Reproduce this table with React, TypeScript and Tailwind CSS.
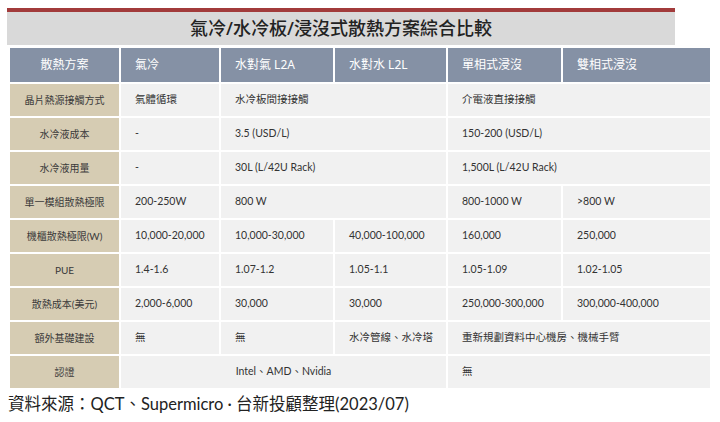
import React from "react";

type Cell = { text: string; span?: number; center?: boolean };
type Row = { label: string; cells: Cell[] };

const FONT = '"Noto Sans", "Noto Sans CJK TC", sans-serif';
const DATA_FONT = 'Lato, "Noto Sans CJK TC", sans-serif';

const HEAD = ["散熱方案", "氣冷", "水對氣 L2A", "水對水 L2L", "單相式浸沒", "雙相式浸沒"];

const ROWS: Row[] = [
  { label: "晶片熱源接觸方式", cells: [{ text: "氣體循環" }, { text: "水冷板間接接觸", span: 2 }, { text: "介電液直接接觸", span: 2 }] },
  { label: "水冷液成本", cells: [{ text: "-" }, { text: "3.5 (USD/L)", span: 2 }, { text: "150-200 (USD/L)", span: 2 }] },
  { label: "水冷液用量", cells: [{ text: "-" }, { text: "30L (L/42U Rack)", span: 2 }, { text: "1,500L (L/42U Rack)", span: 2 }] },
  { label: "單一模組散熱極限", cells: [{ text: "200-250W" }, { text: "800 W", span: 2 }, { text: "800-1000 W" }, { text: ">800 W" }] },
  { label: "機櫃散熱極限(W)", cells: [{ text: "10,000-20,000" }, { text: "10,000-30,000" }, { text: "40,000-100,000" }, { text: "160,000" }, { text: "250,000" }] },
  { label: "PUE", cells: [{ text: "1.4-1.6" }, { text: "1.07-1.2" }, { text: "1.05-1.1" }, { text: "1.05-1.09" }, { text: "1.02-1.05" }] },
  { label: "散熱成本(美元)", cells: [{ text: "2,000-6,000" }, { text: "30,000" }, { text: "30,000" }, { text: "250,000-300,000" }, { text: "300,000-400,000" }] },
  { label: "額外基礎建設", cells: [{ text: "無" }, { text: "無" }, { text: "水冷管線、水冷塔" }, { text: "重新規劃資料中心機房、機械手臂", span: 2 }] },
  { label: "認證", cells: [{ text: "Intel、AMD、Nvidia", span: 3, center: true }, { text: "無", span: 2 }] },
];

const SPAN: Record<number, string> = { 1: "col-span-1", 2: "col-span-2", 3: "col-span-3" };

export default function App() {
  return (
    <div className="h-[422px] w-[720px] bg-white pt-2" style={{ fontFamily: FONT }}>
      <div className="ml-[7px] w-[668px]">
        <div className="h-1 bg-[#a23b3b]" />
        <div className="flex h-[33px] items-center justify-center bg-[#d9d9d9] text-[18px] font-medium text-[#222]">
          氣冷/水冷板/浸沒式散熱方案綜合比較
        </div>
      </div>

      <div className="ml-[10px] mt-[3px] grid w-[700px] grid-cols-[109px_98px_112px_111px_113px_147px] gap-x-[2px] gap-y-[2px]">
        {HEAD.map((h, i) => (
          <div
            key={h}
            className={
              "flex h-[34px] items-center bg-[#8591a5] text-[12px] text-white " +
              (i === 0 ? "justify-center" : "pl-[14px]")
            }
          >
            {h}
          </div>
        ))}
        {ROWS.map((r) => (
          <React.Fragment key={r.label}>
            <div
              className="flex h-[32px] items-center justify-center bg-[#d6ccb3] text-[10px] text-[#3a3a3a]"
              style={{ fontFamily: DATA_FONT }}
            >
              {r.label}
            </div>
            {r.cells.map((c, j) => (
              <div
                key={j}
                className={
                  "flex h-[32px] items-center bg-[#f1f1f1] text-[10.5px] text-[#333] " +
                  SPAN[c.span ?? 1] +
                  (c.center ? " justify-center" : " pl-[14px]")
                }
                style={{ fontFamily: DATA_FONT }}
              >
                {c.text}
              </div>
            ))}
          </React.Fragment>
        ))}
      </div>

      <div
        className="ml-[8px] mt-[5px] text-[16.5px] leading-[22px] text-[#222]"
        style={{ fontFamily: DATA_FONT }}
      >
        資料來源：QCT、Supermicro · 台新投顧整理(2023/07)
      </div>
    </div>
  );
}
